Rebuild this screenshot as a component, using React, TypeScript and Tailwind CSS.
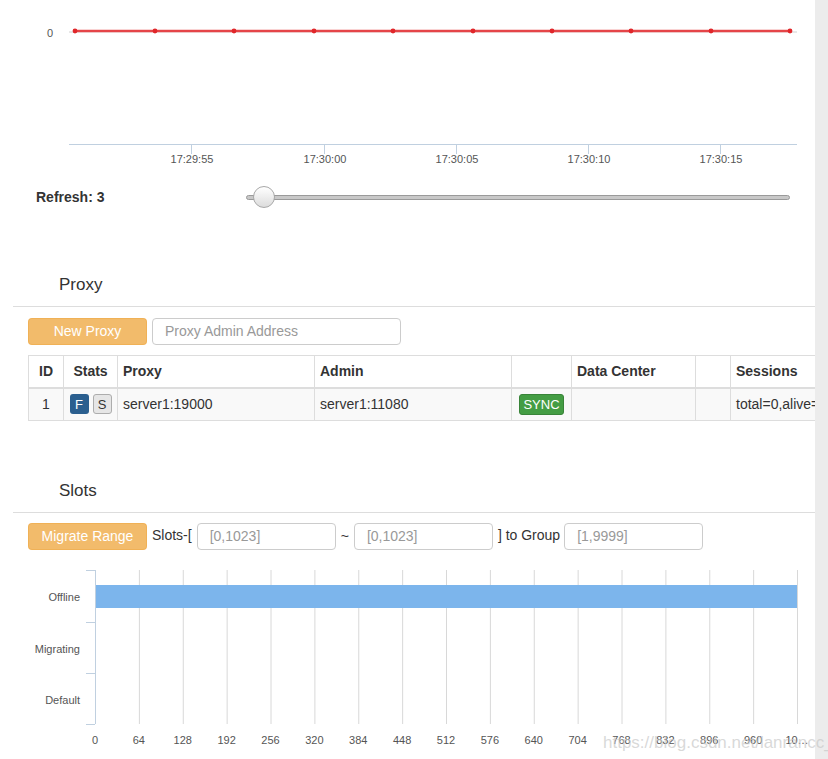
import React from "react";

const font = { fontFamily: '"Liberation Sans", Arial, sans-serif' };

const dotsX = [75, 155, 234, 314, 393, 473, 552, 631, 711, 790];
const timeTicks = [
  { x: 191, t: "17:29:55" },
  { x: 324, t: "17:30:00" },
  { x: 456, t: "17:30:05" },
  { x: 588, t: "17:30:10" },
  { x: 720, t: "17:30:15" },
];

function OpsChart() {
  return (
    <svg width="815" height="170" className="block">
      <line x1="69" y1="32" x2="797" y2="32" stroke="#d0d0d0" strokeWidth="1" />
      <text x="53" y="37" textAnchor="end" fontSize="11" fill="#555" style={font}>
        0
      </text>
      <polyline
        points={dotsX.map((x) => `${x},31`).join(" ")}
        fill="none"
        stroke="#f3a5a5"
        strokeWidth="3"
      />
      <polyline
        points={dotsX.map((x) => `${x},31`).join(" ")}
        fill="none"
        stroke="#e0262a"
        strokeWidth="1.3"
      />
      {dotsX.map((x) => (
        <circle key={x} cx={x} cy="31" r="2.4" fill="#e0262a" />
      ))}
      <line x1="69" y1="144.5" x2="797" y2="144.5" stroke="#c0d0e0" strokeWidth="1" />
      {timeTicks.map((k) => (
        <g key={k.x}>
          <line x1={k.x + 0.5} y1="144" x2={k.x + 0.5} y2="154" stroke="#c0d0e0" />
          <text x={k.x + 1} y="163" textAnchor="middle" fontSize="11" fill="#555" style={font}>
            {k.t}
          </text>
        </g>
      ))}
    </svg>
  );
}

const slotLabels = ["0", "64", "128", "192", "256", "320", "384", "448", "512", "576", "640", "704", "768", "832", "896", "960", "10…"];

function SlotsChart() {
  const step = 702 / 16;
  return (
    <svg width="815" height="199" className="block">
      {slotLabels.map((_, i) =>
        i === 0 ? null : (
          <line
            key={i}
            x1={95.5 + i * step}
            y1="11"
            x2={95.5 + i * step}
            y2="165"
            stroke="#d8d8d8"
          />
        )
      )}
      <rect x="96" y="26" width="701" height="23" fill="#7cb5ec" />
      <line x1="95.5" y1="11" x2="95.5" y2="165" stroke="#c0d0e0" />
      {[11, 63, 114, 165].map((y) => (
        <line key={y} x1="86" y1={y + 0.5} x2="95" y2={y + 0.5} stroke="#c0d0e0" />
      ))}
      {[
        { y: 42, t: "Offline" },
        { y: 94, t: "Migrating" },
        { y: 145, t: "Default" },
      ].map((c) => (
        <text key={c.t} x="80" y={c.y} textAnchor="end" fontSize="11" fill="#555" style={font}>
          {c.t}
        </text>
      ))}
      {slotLabels.map((l, i) => (
        <text
          key={l}
          x={95 + i * step}
          y="185"
          textAnchor="middle"
          fontSize="11"
          fill="#555"
          style={font}
        >
          {l}
        </text>
      ))}
    </svg>
  );
}

function Slider() {
  return (
    <div className="relative ml-[210px] h-[22px] w-[544px]">
      <div className="absolute left-0 right-0 top-[9px] h-[5px] rounded-sm border border-[#9a9a9a] bg-[#c8c8c8]" />
      <div className="absolute left-[7px] top-0 h-[22px] w-[22px] rounded-full border border-[#a8a8a8] bg-gradient-to-b from-white to-[#dcdcdc]" />
    </div>
  );
}

function SectionTitle({ title }: { title: string }) {
  return (
    <div className="border-b border-[#dddddd] ml-[13px]">
      <div className="flex h-[30px] items-center pl-[46px] text-[17px] text-[#333]">{title}</div>
      <div className="h-[6px]" />
    </div>
  );
}

function Input({ placeholder, w }: { placeholder: string; w: string }) {
  return (
    <div
      className={`flex h-[27px] items-center rounded-[4px] border border-[#cccccc] bg-white pl-[12px] text-[14px] text-[#999] ${w}`}
    >
      {placeholder}
    </div>
  );
}

export default function App() {
  return (
    <div className="relative flex h-[759px] w-[828px] overflow-hidden bg-white text-[#333]" style={font}>
      <div className="w-[815px] shrink-0">
        <OpsChart />

        <div className="mt-[13px] flex h-[28px] items-center pl-[36px]">
          <div className="w-[0px] whitespace-nowrap text-[14px] font-bold text-[#333]">Refresh: 3</div>
          <Slider />
        </div>

        <div className="mt-[59px]">
          <SectionTitle title="Proxy" />
        </div>

        <div className="mt-[11px] flex gap-[5px] pl-[28px]">
          <div className="flex h-[27px] w-[119px] items-center justify-center rounded-[4px] border border-[#eea236]/40 bg-[#f2bb6b] text-[14px] text-white">
            New Proxy
          </div>
          <Input placeholder="Proxy Admin Address" w="w-[249px]" />
        </div>

        <div className="mt-[10px] overflow-hidden pl-[28px]">
          <table className="w-[900px] table-fixed border-collapse border border-[#dddddd] text-[14px] text-[#333]">
            <colgroup>
              <col className="w-[35px]" />
              <col className="w-[54px]" />
              <col className="w-[197px]" />
              <col className="w-[197px]" />
              <col className="w-[60px]" />
              <col className="w-[124px]" />
              <col className="w-[35px]" />
              <col />
            </colgroup>
            <thead>
              <tr className="h-[32px] border-b-2 border-[#dddddd] font-bold">
                <th className="border-l border-[#dddddd] text-center">ID</th>
                <th className="border-l border-[#dddddd] text-center">Stats</th>
                <th className="border-l border-[#dddddd] pl-[5px] text-left">Proxy</th>
                <th className="border-l border-[#dddddd] pl-[5px] text-left">Admin</th>
                <th className="border-l border-[#dddddd]"></th>
                <th className="border-l border-[#dddddd] pl-[5px] text-left">Data Center</th>
                <th className="border-l border-[#dddddd]"></th>
                <th className="border-l border-[#dddddd] pl-[5px] text-left">Sessions</th>
              </tr>
            </thead>
            <tbody>
              <tr className="h-[33px] border-b border-[#dddddd] bg-[#f9f9f9]">
                <td className="border-l border-[#dddddd] text-center">1</td>
                <td className="border-l border-[#dddddd]">
                  <div className="flex justify-center gap-[4px]">
                    <span className="flex h-[20px] w-[19px] items-center justify-center rounded-[3px] bg-[#2b5f8f] text-[13px] text-white">
                      F
                    </span>
                    <span className="flex h-[20px] w-[19px] items-center justify-center rounded-[3px] border border-[#adadad] bg-[#e6e6e6] text-[13px] text-[#333]">
                      S
                    </span>
                  </div>
                </td>
                <td className="border-l border-[#dddddd] pl-[5px]">server1:19000</td>
                <td className="border-l border-[#dddddd] pl-[5px]">server1:11080</td>
                <td className="border-l border-[#dddddd]">
                  <div className="flex justify-center">
                    <span className="flex h-[21px] w-[45px] items-center justify-center rounded-[3px] border border-[#398439] bg-[#449d44] text-[13px] text-white">
                      SYNC
                    </span>
                  </div>
                </td>
                <td className="border-l border-[#dddddd]"></td>
                <td className="border-l border-[#dddddd]"></td>
                <td className="whitespace-nowrap border-l border-[#dddddd] pl-[5px]">total=0,alive=0</td>
              </tr>
            </tbody>
          </table>
        </div>

        <div className="mt-[55px]">
          <SectionTitle title="Slots" />
        </div>

        <div className="mt-[10px] flex items-center pl-[28px] text-[14px] text-[#333]">
          <div className="flex h-[27px] w-[119px] items-center justify-center rounded-[4px] border border-[#eea236]/40 bg-[#f2bb6b] text-[14px] text-white">
            Migrate Range
          </div>
          <span className="ml-[5px] mr-[5px] -mt-[2px]">Slots-[</span>
          <Input placeholder="[0,1023]" w="w-[139px]" />
          <span className="mx-[5px]">~</span>
          <Input placeholder="[0,1023]" w="w-[139px]" />
          <span className="ml-[5px] mr-[4px] -mt-[2px]">] to Group</span>
          <Input placeholder="[1,9999]" w="w-[139px]" />
        </div>

        <div className="mt-[9px]">
          <SlotsChart />
        </div>
      </div>
      <div className="w-[13px] shrink-0 bg-[#ececec]" />

      <div className="pointer-events-none absolute left-[603px] top-[730px] whitespace-nowrap text-[17px] text-[#c8c8c8]/70">
        https://blog.csdn.net/lanrancc_
      </div>
    </div>
  );
}
